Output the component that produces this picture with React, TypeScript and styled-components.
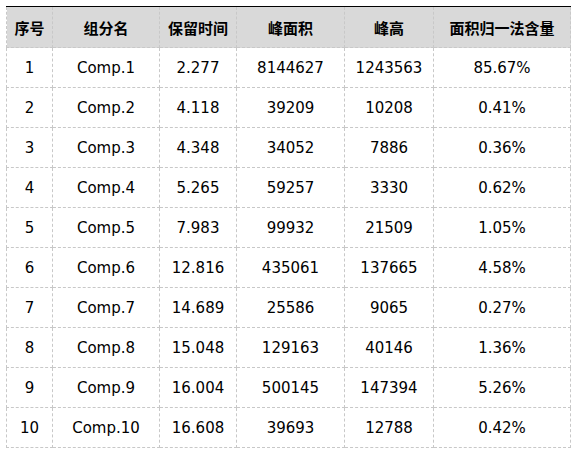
import React from "react";
import styled, { createGlobalStyle } from "styled-components";

const Global = createGlobalStyle`
  html, body { margin: 0; padding: 0; background: #fff; }
  body { font-family: "DejaVu Sans", Verdana, sans-serif; }
`;

const Page = styled.div`
  padding: 6px 0 0 6px;
`;

const Table = styled.table`
  border-collapse: collapse;
  table-layout: fixed;
  width: 565px;
  border-top: 1px solid #000;
`;

const HeadCell = styled.th<{ $w: number }>`
  width: ${(p) => p.$w - 1}px;
  height: 40px;
  padding: 0;
  background: #d9d9d9;
  border: 1px dashed #c8c8c8;
  border-top: 1px solid #000;
  font-family: "Noto Sans CJK SC", sans-serif;
  font-weight: 700;
  font-size: 15px;
  color: #000;
  text-align: center;
  vertical-align: middle;
`;

const Cell = styled.td`
  height: 39px;
  padding: 0;
  border: 1px dashed #c8c8c8;
  font-family: "DejaVu Sans", Verdana, sans-serif;
  font-size: 15px;
  color: #000;
  text-align: center;
  vertical-align: middle;
`;

const cols = [
  { t: "序号", w: 46 },
  { t: "组分名", w: 107 },
  { t: "保留时间", w: 77 },
  { t: "峰面积", w: 108 },
  { t: "峰高", w: 89 },
  { t: "面积归一法含量", w: 137 },
];

const rows = [
  ["1", "Comp.1", "2.277", "8144627", "1243563", "85.67%"],
  ["2", "Comp.2", "4.118", "39209", "10208", "0.41%"],
  ["3", "Comp.3", "4.348", "34052", "7886", "0.36%"],
  ["4", "Comp.4", "5.265", "59257", "3330", "0.62%"],
  ["5", "Comp.5", "7.983", "99932", "21509", "1.05%"],
  ["6", "Comp.6", "12.816", "435061", "137665", "4.58%"],
  ["7", "Comp.7", "14.689", "25586", "9065", "0.27%"],
  ["8", "Comp.8", "15.048", "129163", "40146", "1.36%"],
  ["9", "Comp.9", "16.004", "500145", "147394", "5.26%"],
  ["10", "Comp.10", "16.608", "39693", "12788", "0.42%"],
];

export default function App() {
  return (
    <Page>
      <Global />
      <Table>
        <thead>
          <tr>
            {cols.map((c) => (
              <HeadCell key={c.t} $w={c.w}>
                {c.t}
              </HeadCell>
            ))}
          </tr>
        </thead>
        <tbody>
          {rows.map((r) => (
            <tr key={r[0]}>
              {r.map((v, i) => (
                <Cell key={i}>{v}</Cell>
              ))}
            </tr>
          ))}
        </tbody>
      </Table>
    </Page>
  );
}
